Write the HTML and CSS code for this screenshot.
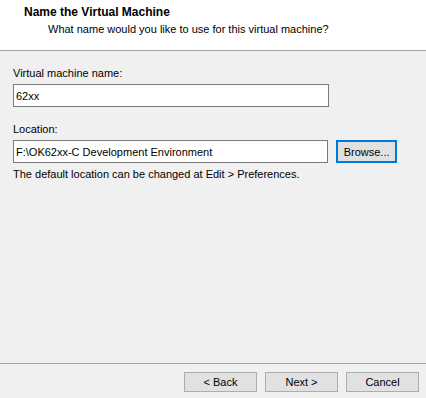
FILE: index.html
```html
<!DOCTYPE html>
<html lang="en">
<head>
    <meta charset="UTF-8">
    <meta name="viewport" content="width=device-width, initial-scale=1.0">
    <title>New Virtual Machine Wizard</title>
    <link rel="stylesheet" href="styles.css">
</head>
<body>
    <div class="wizard">
        <header class="wizard-header">
            <h1>Name the Virtual Machine</h1>
            <p>What name would you like to use for this virtual machine?</p>
        </header>
        <main class="wizard-body">
            <label class="field-label" for="vmName">Virtual machine name:</label>
            <div class="field-row">
                <input type="text" id="vmName" class="text-box" value="62xx">
            </div>
            <label class="field-label location-label" for="vmLocation">Location:</label>
            <div class="field-row">
                <input type="text" id="vmLocation" class="text-box" value="F:\OK62xx-C Development Environment">
                <button class="btn btn-focus">Browse...</button>
            </div>
            <p class="hint">The default location can be changed at Edit &gt; Preferences.</p>
        </main>
        <footer class="wizard-footer">
            <button class="btn">&lt; Back</button>
            <button class="btn">Next &gt;</button>
            <button class="btn">Cancel</button>
        </footer>
    </div>
</body>
</html>
```

FILE: styles.css
```css
body {
    margin: 0;
    padding: 0;
    background-color: #f0f0f0;
    font-family: "Liberation Sans", Arial, sans-serif;
    font-size: 11px;
    color: #000;
}

.wizard {
    display: flex;
    flex-direction: column;
    height: 100vh;
}

.wizard-header {
    background-color: #fff;
    height: 51px;
    box-sizing: border-box;
    padding: 5px 0 0 24px;
    border-bottom: 1px solid #a0a0a0;
}

.wizard-header h1 {
    margin: 0;
    font-size: 12px;
    font-weight: bold;
    line-height: 15px;
}

.wizard-header p {
    margin: 2px 0 0 24px;
    line-height: 15px;
}

.wizard-body {
    flex: 1;
    padding: 15px 29px 0 13px;
    display: flex;
    flex-direction: column;
}

.field-label {
    line-height: 15px;
    margin-bottom: 3px;
}

.location-label {
    margin-top: 15px;
}

.field-row {
    display: flex;
    align-items: center;
    gap: 8px;
}

.text-box {
    width: 316px;
    height: 23px;
    box-sizing: border-box;
    border: 1px solid #7a7a7a;
    background-color: #fff;
    padding: 0 2px;
    font-family: inherit;
    font-size: 11px;
    color: #000;
    outline: none;
}

.btn {
    width: 73px;
    height: 20px;
    padding: 0;
    box-sizing: border-box;
    background-color: #e1e1e1;
    border: 1px solid #adadad;
    font-family: inherit;
    font-size: 11px;
    color: #000;
}

.btn-focus {
    width: 61px;
    height: 23px;
    border: 2px solid #0078d7;
}

.hint {
    margin: 4px 0 0;
    line-height: 15px;
}

.wizard-footer {
    border-top: 1px solid #a0a0a0;
    height: 35px;
    box-sizing: border-box;
    padding: 8px 7px 0 0;
    display: flex;
    justify-content: flex-end;
    align-items: flex-start;
    gap: 8px;
}
```
